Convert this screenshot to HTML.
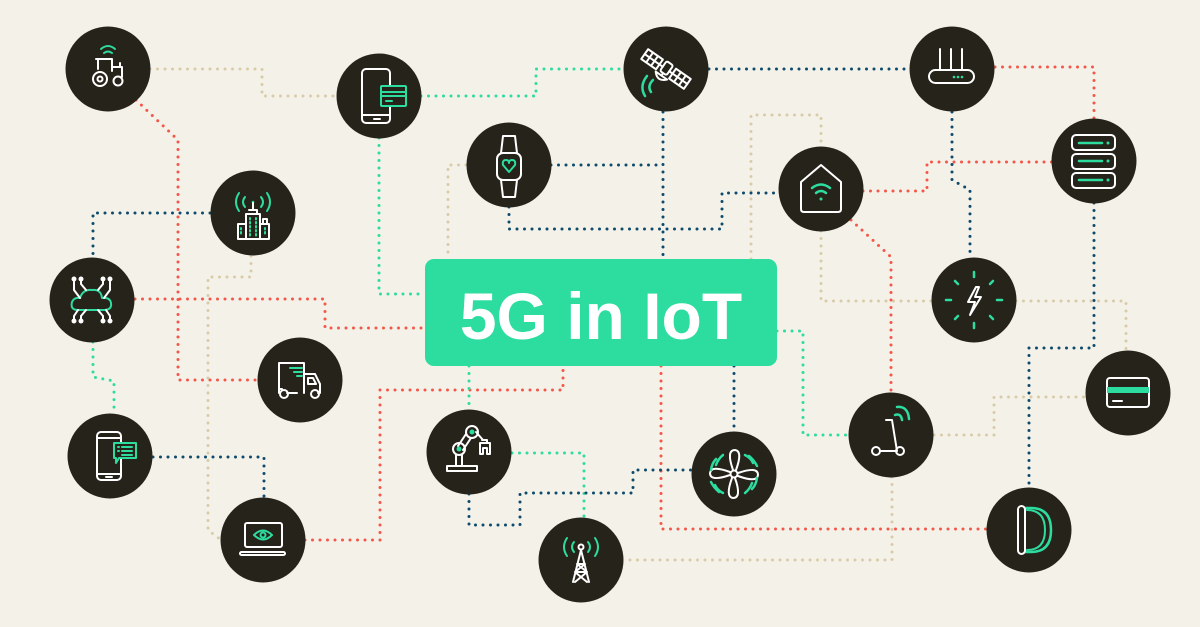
<!DOCTYPE html>
<html><head><meta charset="utf-8"><style>
html,body{margin:0;padding:0;background:#f4f1e9;}
svg{display:block}
</style></head><body>
<svg width="1200" height="627" viewBox="0 0 1200 627" xmlns="http://www.w3.org/2000/svg">
<rect width="1200" height="627" fill="#f4f1e9"/>
<g fill="none" stroke-width="3" stroke-linecap="round" stroke-dasharray="0 7.5">
 <g stroke="#d8cca8">
  <path d="M150 69 H262 V96 H337"/>
  <path d="M251 256 V277 H208 V530 L221 540"/>
  <path d="M466 165 H448 V259"/>
  <path d="M751 259 V115 H821 V146"/>
  <path d="M821 231 V301 H932"/>
  <path d="M1016 301 H1126 V351"/>
  <path d="M934 435 H994 V397 H1086"/>
  <path d="M892 477 V560 H623"/>
 </g>
 <g stroke="#f4574a">
  <path d="M136 100 L178 140 V380 H258"/>
  <path d="M135 299 H325 V328 H425"/>
  <path d="M995 67 H1094 V119"/>
  <path d="M863 191 H927 V162 H1052"/>
  <path d="M851 220 L891 257 V393"/>
  <path d="M305 540 H380 V390 H563 V366"/>
  <path d="M661 366 V529 H987"/>
 </g>
 <g stroke="#2ddc9f">
  <path d="M421 96 H536 V69 H624"/>
  <path d="M379 138 V294 H425"/>
  <path d="M93 342 V377 L114 381 V414"/>
  <path d="M469 366 V410"/>
  <path d="M512 453 H584 V518"/>
  <path d="M777 331 H803 V435 H849"/>
 </g>
 <g stroke="#0d4a6b">
  <path d="M709 69 H910"/>
  <path d="M210 213 H93 V258"/>
  <path d="M551 165 H663"/>
  <path d="M663 112 V259"/>
  <path d="M509 207 V229 H722 V193 H779"/>
  <path d="M952 112 V180 L970 190 V258"/>
  <path d="M1094 203 V348 H1029 V487"/>
  <path d="M153 457 H264 V498"/>
  <path d="M469 494 V525 H520 V493 H633 V470 H692"/>
  <path d="M734 366 V432"/>
 </g>
</g>

<rect x="425" y="259" width="352" height="107" rx="9" fill="#2ddc9f"/>
<text x="601" y="339" text-anchor="middle" font-family="Liberation Sans, sans-serif" font-weight="bold" font-size="66" fill="#fff">5G in IoT</text>

<g fill="#26231b">
 <circle cx="108" cy="69" r="42.5"/><circle cx="379" cy="96" r="42.5"/><circle cx="509" cy="165" r="42.5"/>
 <circle cx="253" cy="213" r="42.5"/><circle cx="92" cy="300" r="42.5"/><circle cx="666" cy="69" r="42.5"/>
 <circle cx="952" cy="69" r="42.5"/><circle cx="1094" cy="161" r="42.5"/><circle cx="821" cy="189" r="42.5"/>
 <circle cx="974" cy="300" r="42.5"/><circle cx="300" cy="380" r="42.5"/><circle cx="110" cy="456" r="42.5"/>
 <circle cx="263" cy="540" r="42.5"/><circle cx="469" cy="452" r="42.5"/><circle cx="581" cy="560" r="42.5"/>
 <circle cx="734" cy="474" r="42.5"/><circle cx="891" cy="435" r="42.5"/><circle cx="1128" cy="393" r="42.5"/>
 <circle cx="1029" cy="530" r="42.5"/>
</g>

<g fill="none" stroke-width="2" stroke-linecap="round" stroke-linejoin="round">
 <!-- tractor -->
 <g transform="translate(108,69)">
  <path d="M-7 -20 Q0 -26 7 -20 M-4 -16 Q0 -19 4 -16" stroke="#2ddc9f"/>
  <path d="M-12 -10 H4 V2 M-10 -10 V0 M4 -2 H14 V8 M12 -2 V-6" stroke="#fff"/>
  <circle cx="-8" cy="10" r="7" stroke="#fff"/><circle cx="-8" cy="10" r="2.5" stroke="#fff"/>
  <circle cx="10" cy="12" r="4.5" stroke="#fff"/>
 </g>
 <!-- phone card -->
 <g transform="translate(379,96)">
  <rect x="-17" y="-27" width="28" height="54" rx="4" stroke="#fff"/>
  <path d="M-17 19 H11 M-5 23 H1" stroke="#fff"/>
  <rect x="2" y="-10" width="25" height="20" rx="1" fill="#26231b" stroke="#2ddc9f"/>
  <path d="M2 -4 H27 M2 0 H27 M7 5 H13" stroke="#2ddc9f"/>
 </g>
 <!-- watch -->
 <g transform="translate(509,165)">
  <rect x="-12" y="-12" width="24" height="27" rx="6" stroke="#fff"/>
  <path d="M-8 -12 L-6 -29 H6 L8 -12 M-8 15 L-6 32 H6 L8 15" stroke="#fff"/>
  <path d="M0 7 L-6 0 Q-7 -5 -3 -5 Q0 -5 0 -2 Q0 -5 3 -5 Q7 -5 6 0 Z" stroke="#2ddc9f"/>
 </g>
 <!-- building -->
 <g transform="translate(253,213)">
  <path d="M-8 -16 Q-12 -11 -8 -6 M8 -16 Q12 -11 8 -6 M-14 -20 Q-20 -11 -14 -2 M14 -20 Q20 -11 14 -2" stroke="#2ddc9f"/>
  <circle cx="0" cy="-11" r="1.3" fill="#2ddc9f" stroke="none"/>
  <path d="M0 -10 V-3 M-4 -3 H4 V1 M-7 1 H7 V26 H-7 Z M-15 11 H-7 M-15 11 V26 H16 V11 H7 M10 11 V6 H14 V11" stroke="#fff"/>
  <path d="M-3 5 V23 M3 5 V23 M-12 15 V23 M12 15 V23" stroke="#2ddc9f" stroke-dasharray="1.5 2.5"/>
 </g>
 <!-- cloud -->
 <g transform="translate(92,300)">
  <path d="M-14 10 Q-22 10 -20 2 Q-18 -3 -12 -2 Q-9 -11 0 -10 Q9 -11 10 -2 Q18 -3 19 3 Q20 10 12 10 Z" stroke="#2ddc9f"/>
  <path d="M-6 -10 L-11 -16 V-20 M-12 -2 L-18 -10 V-20 M6 -10 L11 -16 V-20 M12 -2 L18 -10 V-20 M-6 10 L-11 16 V20 M-14 10 L-18 16 V20 M6 10 L11 16 V20 M14 10 L18 16 V20" stroke="#fff"/>
  <g fill="#fff" stroke="none"><circle cx="-11" cy="-21" r="2.5"/><circle cx="-18" cy="-21" r="2.5"/><circle cx="11" cy="-21" r="2.5"/><circle cx="18" cy="-21" r="2.5"/><circle cx="-11" cy="21" r="2.5"/><circle cx="-18" cy="21" r="2.5"/><circle cx="11" cy="21" r="2.5"/><circle cx="18" cy="21" r="2.5"/></g>
 </g>
 <!-- satellite -->
 <g transform="translate(666,69) rotate(35)">
  <rect x="-26" y="-6" width="18" height="12" stroke="#fff"/>
  <rect x="8" y="-6" width="18" height="12" stroke="#fff"/>
  <path d="M-20 -6 V6 M-14 -6 V6 M14 -6 V6 M20 -6 V6 M-26 0 H-8 M8 0 H26 M-8 0 H-4 M4 0 H8" stroke="#fff"/>
  <rect x="-4" y="-7" width="8" height="12" rx="2" stroke="#fff"/>
  <path d="M-7 8 Q0 16 7 8 Z M0 8 V6" stroke="#fff"/>
 </g>
 <path d="M653 80 Q647 86 651 92 M647 76 Q639 86 645 96" stroke="#2ddc9f" stroke-width="2.5"/>
 <!-- router -->
 <g transform="translate(952,69)">
  <rect x="-23" y="1" width="45" height="13" rx="6.5" stroke="#fff"/>
  <path d="M-12 1 V-20 M-1 1 V-20 M10 1 V-20" stroke="#fff"/>
  <g fill="#2ddc9f" stroke="none"><circle cx="2" cy="8" r="1.3"/><circle cx="6" cy="8" r="1.3"/><circle cx="10" cy="8" r="1.3"/></g>
 </g>
 <!-- server -->
 <g transform="translate(1094,161)">
  <rect x="-22" y="-26" width="43" height="15" rx="4" stroke="#fff"/>
  <rect x="-22" y="-7" width="43" height="15" rx="4" stroke="#fff"/>
  <rect x="-22" y="12" width="43" height="15" rx="4" stroke="#fff"/>
  <path d="M-15 -18 H8 M-15 0 H8 M-15 19 H8" stroke="#2ddc9f" stroke-width="2.5"/>
  <g fill="#2ddc9f" stroke="none"><circle cx="14" cy="-18" r="1.5"/><circle cx="14" cy="0" r="1.5"/><circle cx="14" cy="19" r="1.5"/></g>
 </g>
 <!-- home -->
 <g transform="translate(821,189)">
  <path d="M-20 -7 L0 -24 L20 -7 V20 Q20 23 17 23 H-17 Q-20 23 -20 20 Z" stroke="#fff"/>
  <path d="M-9 -1 Q0 -8 9 -1 M-5 4 Q0 0 5 4" stroke="#2ddc9f" stroke-width="2.5"/>
  <circle cx="0" cy="10" r="1.5" fill="#2ddc9f" stroke="none"/>
 </g>
 <!-- power -->
 <g transform="translate(974,300)">
  <path d="M2 -13 L-6 2 H1 L-4 15 L7 -3 H1 L5 -13 Z" stroke="#fff"/>
  <g stroke="#2ddc9f" stroke-width="2.5"><path d="M0 -28 V-23 M0 23 V28 M-28 0 H-23 M23 0 H28 M-19 -19 L-16 -16 M19 -19 L16 -16 M-19 19 L-16 16 M19 19 L16 16"/></g>
 </g>
 <!-- truck -->
 <g transform="translate(300,380)">
  <path d="M-21 13 V-17 H4 V13 M4 -6 H15 L20 4 V13 H18 M-13 13 H-3 M-21 9 H-18" stroke="#fff"/>
  <path d="M8 -2 H13 L16 4 H8 Z" stroke="#fff"/>
  <circle cx="-16" cy="14" r="4" stroke="#fff"/><circle cx="15" cy="14" r="4" stroke="#fff"/>
  <path d="M-10 -12 H2 M-6 -8 H2 M-3 -4 H2" stroke="#2ddc9f"/>
 </g>
 <!-- phone chat -->
 <g transform="translate(110,456)">
  <rect x="-13" y="-24" width="24" height="48" rx="4" stroke="#fff"/>
  <path d="M-13 -18 H11 M-13 18 H11 M-4 21 H2" stroke="#fff"/>
  <path d="M4 -13 H26 V2 H9 L6 7 V2 H4 Z" fill="#26231b" stroke="#2ddc9f"/>
  <path d="M12 -9 H22 M12 -5 H22 M12 -1 H22 M8 -9 H9 M8 -5 H9" stroke="#2ddc9f"/>
 </g>
 <!-- laptop -->
 <g transform="translate(263,540)">
  <rect x="-18" y="-17" width="37" height="24" rx="2" stroke="#fff"/>
  <rect x="-23" y="12" width="45" height="3" rx="1.5" stroke="#fff"/>
  <path d="M-9 -5 Q0 -14 9 -5 Q0 4 -9 -5 Z" stroke="#2ddc9f"/>
  <circle cx="0" cy="-5" r="2.5" stroke="#2ddc9f"/>
 </g>
 <!-- robot -->
 <g transform="translate(469,452)">
  <rect x="-22" y="14" width="30" height="5" stroke="#fff"/>
  <path d="M-13 14 V3 M-7 14 V3 M-11 -6 L-3 -18 M-6 -2 L2 -14 M7 -20 L14 -12" stroke="#fff"/>
  <circle cx="-10" cy="-3" r="6" stroke="#fff"/><circle cx="-10" cy="-3" r="2.5" fill="#2ddc9f" stroke="none"/>
  <circle cx="3" cy="-20" r="6" stroke="#fff"/><circle cx="3" cy="-20" r="2.5" fill="#2ddc9f" stroke="none"/>
  <path d="M13 -12 H18 V-9 M11 -9 H21 V2 H18 V-4 H14 V2 H11 Z" stroke="#fff"/>
 </g>
 <!-- tower -->
 <g transform="translate(581,560)">
  <path d="M-7 -18 Q-11 -13 -7 -8 M7 -18 Q11 -13 7 -8 M-14 -22 Q-20 -13 -14 -4 M14 -22 Q20 -13 14 -4" stroke="#2ddc9f"/>
  <circle cx="0" cy="-13" r="2.5" stroke="#fff"/>
  <path d="M0 -10 L-8 22 M0 -10 L8 22 M-4 4 H4 M-6 12 H6 M-6 12 L6 22 M6 12 L-6 22 M-4 4 L6 12 M4 4 L-6 12" stroke="#fff"/>
 </g>
 <!-- fan -->
 <g transform="translate(734,474)">
  <circle cx="0" cy="0" r="3.5" stroke="#fff"/>
  <path d="M-1 -4 Q-8 -24 1 -24 Q9 -23 2 -4 M4 -1 Q24 -8 24 1 Q23 9 4 2 M1 4 Q8 24 -1 24 Q-9 23 -2 4 M-4 1 Q-24 8 -24 -1 Q-23 -9 -4 -2" stroke="#fff"/>
  <path d="M-18 -9 Q-16 -15 -11 -19 M11 -19 Q17 -16 19 -11 M18 9 Q16 15 11 19 M-11 19 Q-17 16 -19 11 M-23 -4 Q-22 -11 -18 -15 M15 -18 Q20 -14 23 -8 M23 4 Q22 11 18 15 M-15 18 Q-20 14 -23 8" stroke="#2ddc9f" stroke-width="2.5"/>
 </g>
 <!-- scooter -->
 <g transform="translate(891,435)">
  <path d="M-5 -15 H1 L6 16 H-11" stroke="#fff"/>
  <circle cx="-15" cy="16" r="4" stroke="#fff"/><circle cx="9" cy="16" r="4" stroke="#fff"/>
  <path d="M4 -20 Q10 -22 11 -15 M6 -28 Q17 -29 18 -16" stroke="#2ddc9f" stroke-width="2.5"/>
 </g>
 <!-- card -->
 <g transform="translate(1128,393)">
  <rect x="-21" y="-15" width="42" height="29" rx="3" stroke="#fff"/>
  <rect x="-21" y="-6" width="42" height="6" fill="#2ddc9f" stroke="none"/>
  <path d="M-15 8 H-6" stroke="#fff"/>
 </g>
 <!-- D -->
 <g transform="translate(1029,530)">
  <path d="M-4 -22 H2 Q22 -22 22 0 Q22 22 2 22 H-4" stroke="#2ddc9f" stroke-width="2.5"/>
  <path d="M-2 -20 Q16 -20 16 0 Q16 20 -2 20" stroke="#2ddc9f"/>
  <rect x="-11" y="-24" width="7" height="48" rx="3.5" stroke="#fff"/>
 </g>
</g>
</svg>
</body></html>
